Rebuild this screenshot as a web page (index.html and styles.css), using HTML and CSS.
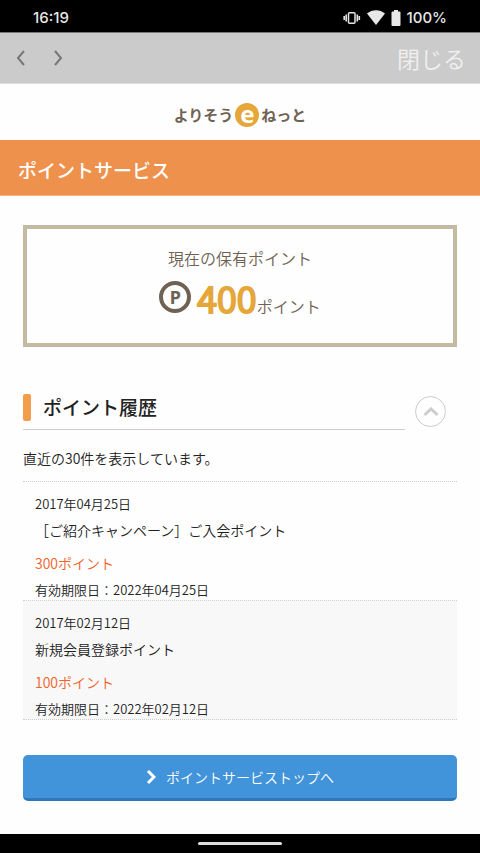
FILE: index.html
```html
<!DOCTYPE html>
<html lang="ja">
<head>
<meta charset="utf-8">
<meta name="viewport" content="width=device-width, initial-scale=1">
<title>ポイントサービス</title>
<link rel="stylesheet" href="styles.css">
</head>
<body>
<div class="status">
  <span>16:19</span>
  <div class="status-icons">
    <svg width="18" height="14" viewBox="0 0 18 14" fill="none" stroke="#e4e4e4"><rect x="5.5" y="1.7" width="6.500" height="10.6" rx="1" stroke-width="1.5"/><path d="M3.2 3.5v7M14.300 3.5v7M1.2 5v4M16.300 5v4" stroke-width="1.6"/></svg>
    <svg width="18" height="15" viewBox="0 0 18 15" fill="#e8e8e8"><path d="M0 3.6C5-1 13-1 18 3.6L9 15Z"/></svg>
    <svg width="10" height="16" viewBox="0 0 10 16" fill="#e8e8e8"><path d="M3 0h4v1.5h1.5a1 1 0 0 1 1 1V15a1 1 0 0 1-1 1h-7a1 1 0 0 1-1-1V2.500a1 1 0 0 1 1-1H3Z"/></svg>
    <span>100%</span>
  </div>
</div>
<nav class="toolbar">
  <button class="nav-button" type="button" aria-label="戻る"><svg width="10" height="16" viewBox="0 0 10 16"><path d="M8 1 2 8l6 7"/></svg></button>
  <button class="nav-button" type="button" aria-label="進む"><svg width="10" height="16" viewBox="0 0 10 16"><path d="m2 1 6 7-6 7"/></svg></button>
  <button class="close" type="button">閉じる</button>
</nav>
<header class="brand"><span>よりそう</span><span class="brand-e">e</span><span>ねっと</span></header>
<h1 class="page-title">ポイントサービス</h1>
<main class="content">
  <section class="balance">
    <p class="balance-label">現在の保有ポイント</p>
    <p class="balance-value"><span class="coin">P</span><span class="amount">400</span><span>ポイント</span></p>
  </section>
  <section>
    <div class="history-head">
      <h2 class="history-title">ポイント履歴</h2>
      <button class="toggle" type="button" aria-label="履歴を閉じる"><svg width="16" height="10" viewBox="0 0 16 10"><path d="m1.500 8 6.500-6 6.500 6"/></svg></button>
    </div>
    <p class="note">直近の30件を表示しています。</p>
    <ul class="history">
      <li class="entry">
        <p class="date">2017年04月25日</p>
        <p class="reason">［ご紹介キャンペーン］ご入会ポイント</p>
        <p class="points">300ポイント</p>
        <p class="date">有効期限日：2022年04月25日</p>
      </li>
      <li class="entry">
        <p class="date">2017年02月12日</p>
        <p class="reason">新規会員登録ポイント</p>
        <p class="points">100ポイント</p>
        <p class="date">有効期限日：2022年02月12日</p>
      </li>
    </ul>
  </section>
  <a class="top-link" href="#"><svg width="10" height="16" viewBox="0 0 10 16"><path d="m2 2 6 6-6 6"/></svg>ポイントサービストップへ</a>
</main>
<footer class="gesture"><div class="gesture-bar"></div></footer>
</body>
</html>
```

FILE: styles.css
```css
* { box-sizing: border-box; }
body {
  margin: 0;
  min-height: 100vh;
  display: flex;
  flex-direction: column;
  background: #fefefe;
  color: #222;
  font-family: "Noto Sans CJK JP", sans-serif;
  font-size: 14px;
  font-weight: 350;
  line-height: 20px;
}
h1, h2, p, ul { margin: 0; padding: 0; }
button { padding: 0; border: 0; background: none; font: inherit; color: inherit; }
svg { display: block; flex: none; }

.status {
  display: flex;
  justify-content: space-between;
  align-items: center;
  height: 32px;
  padding: 3px 33px 0;
  background: #000;
  color: #e8e8e8;
  font-family: Inter, sans-serif;
  font-size: 15px;
  font-weight: 500;
}
.status-icons { display: flex; align-items: center; gap: 6px; }

.toolbar {
  display: flex;
  align-items: center;
  gap: 27px;
  height: 52px;
  padding: 0 14px 0 16px;
  background: #cbcbcb;
  border-top: 1px solid #777;
  border-bottom: 1px solid #dedede;
}
.nav-button path { fill: none; stroke: #777; stroke-width: 2; }
.close { margin-left: auto; color: #f0f0f0; font-size: 23px; line-height: 32px; }

.brand {
  display: flex;
  justify-content: center;
  align-items: center;
  gap: 2px;
  height: 56px;
  padding-top: 6px;
  color: #6f6253;
  font-size: 15px;
  font-weight: 700;
}
.brand-e {
  width: 24px;
  height: 24px;
  border-radius: 50%;
  background: #e5a63a;
  color: #fff;
  font-family: "Noto Sans", sans-serif;
  font-size: 24px;
  line-height: 21px;
  text-align: center;
}

.page-title {
  padding: 18px 18px 13px;
  background: #ee914c;
  border-bottom: 1px solid #f3b27f;
  color: #fff;
  font-size: 19px;
  font-weight: 500;
  line-height: 24px;
}

.content { flex: 1; padding: 29px 23px 33px; }
.balance {
  padding: 17px 0 13px;
  border: 4px solid #c3baa2;
  color: #6f6253;
  font-size: 16px;
  text-align: center;
}
.balance-label { padding-bottom: 3px; line-height: 24px; }
.balance-value {
  display: flex;
  justify-content: center;
  align-items: baseline;
  line-height: 48px;
}
.coin {
  align-self: flex-start;
  width: 32px;
  height: 32px;
  margin: 8px 6px 0 0;
  border: 4px solid #6f6253;
  border-radius: 50%;
  font-family: "Noto Sans", sans-serif;
  font-size: 18px;
  font-weight: 700;
  line-height: 24px;
}
.amount {
  color: #e5a63a;
  font-size: 36px;
  -webkit-text-stroke: 2px #e5a63a;
}

.history-head { display: flex; gap: 10px; margin-top: 43px; }
.history-title {
  flex: 1;
  display: flex;
  align-items: center;
  gap: 12px;
  padding: 3px 0 8px;
  border-bottom: 1px solid #ccc;
  font-size: 19px;
  font-weight: 500;
  line-height: 28px;
}
.history-title::before {
  content: "";
  width: 8px;
  height: 27px;
  border-radius: 2px;
  background: #f19d4a;
}
.toggle {
  display: grid;
  place-items: center;
  width: 31px;
  height: 31px;
  margin: 6px 11px 0 0;
  border: 1px solid #ccc;
  border-radius: 50%;
}
.toggle path { fill: none; stroke: #ccc; stroke-width: 3; }

.note { padding: 18px 0 13px; }
.history { list-style: none; border-top: 1px dotted #ccc; }
.entry { padding: 12px 12px 0; border-bottom: 1px dotted #ccc; }
.entry:nth-child(even) { background: #f8f8f8; }
.date { font-size: 13px; }
.reason { padding: 6px 0; }
.points { padding: 7px 0; color: #f0622c; }

.top-link {
  display: flex;
  justify-content: center;
  align-items: center;
  gap: 10px;
  height: 46px;
  margin-top: 35px;
  border-bottom: 3px solid #2f79b8;
  border-radius: 5px;
  background: #4193da;
  color: #fff;
  text-decoration: none;
}
.top-link path { fill: none; stroke: #fff; stroke-width: 3; }

.gesture {
  display: grid;
  place-items: center;
  height: 19px;
  background: #000;
}
.gesture-bar { width: 84px; height: 3px; border-radius: 2px; background: #ddd; }
```
